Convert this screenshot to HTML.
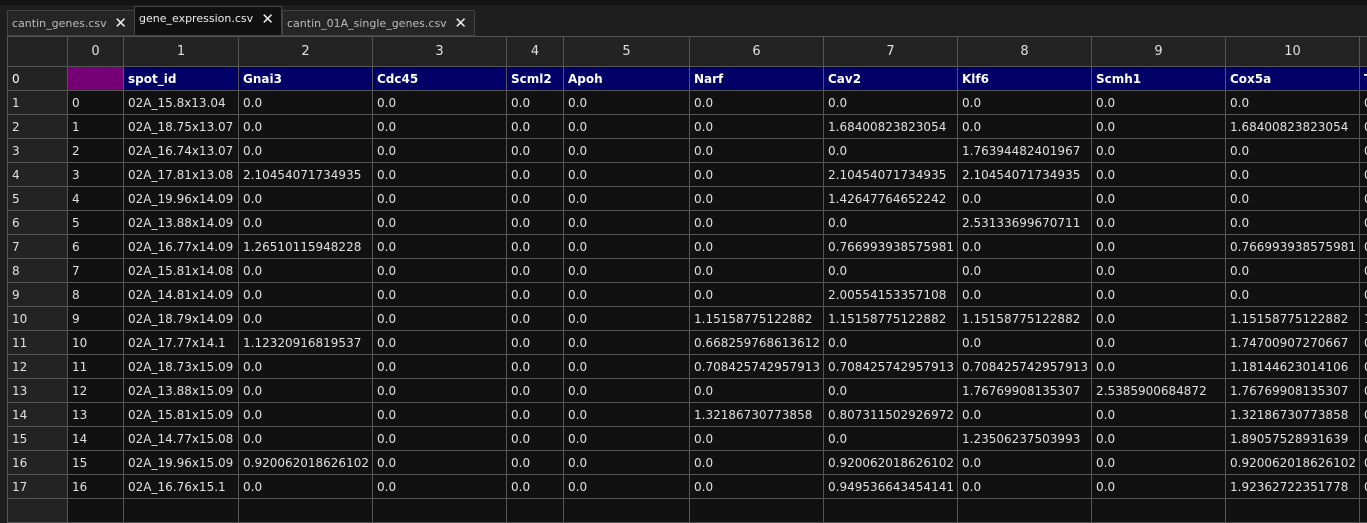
<!DOCTYPE html><html><head><style>
body{margin:0;width:1367px;height:502px;background:#1e1e1e;overflow:hidden;font-family:"DejaVu Sans","Liberation Sans",sans-serif;font-size:12px;color:#e0e0e0;position:relative}
.top{position:absolute;left:0;top:0;width:1367px;height:5px;background:#141414}
.tabs{position:absolute;left:7px;top:10px;height:26px;}
.tab{position:absolute;top:0;height:26px;background:#252525;border:1px solid #444;color:#bbb;font-size:11px;line-height:25px;padding-left:4px;box-sizing:border-box;white-space:nowrap;overflow:hidden}
.tab.a{background:#111;color:#eee;top:-4px;height:30px;line-height:24px}
.x{position:absolute;right:7px;font-size:15px;color:#eee}
table{position:absolute;left:7px;top:36px;border-collapse:collapse;table-layout:fixed;width:1372px}
td{border:1px solid #555;height:24px;padding:0 0 0 4px;background:#111;white-space:nowrap;overflow:hidden;box-sizing:border-box}
tr.h td{height:30px;background:#232323;text-align:center;font-size:13px;padding:0}
tr.n td{background:#000066;font-weight:bold;color:#fff}
tr.n td.p{background:#750075}
td.r{background:#232323!important;font-weight:normal!important}
</style></head><body>
<div class="top"></div>
<div class="tabs">
<div class="tab" style="left:0;width:128px">cantin_genes.csv<span class="x">✕</span></div>
<div class="tab a" style="left:127px;width:148px">gene_expression.csv<span class="x">✕</span></div>
<div class="tab" style="left:275px;width:193px">cantin_01A_single_genes.csv<span class="x">✕</span></div>
</div>
<table>
<colgroup><col style="width:60px"><col style="width:56px"><col style="width:115px"><col style="width:134px"><col style="width:134px"><col style="width:57px"><col style="width:126px"><col style="width:134px"><col style="width:134px"><col style="width:134px"><col style="width:134px"><col style="width:134px"><col style="width:20px"></colgroup>
<tr class="h"><td></td><td>0</td><td>1</td><td>2</td><td>3</td><td>4</td><td>5</td><td>6</td><td>7</td><td>8</td><td>9</td><td>10</td><td></td></tr>
<tr class="n"><td class="r">0</td><td class="p"></td><td>spot_id</td><td>Gnai3</td><td>Cdc45</td><td>Scml2</td><td>Apoh</td><td>Narf</td><td>Cav2</td><td>Klf6</td><td>Scmh1</td><td>Cox5a</td><td>T</td></tr>
<tr><td class="r">1</td><td>0</td><td>02A_15.8x13.04</td><td>0.0</td><td>0.0</td><td>0.0</td><td>0.0</td><td>0.0</td><td>0.0</td><td>0.0</td><td>0.0</td><td>0.0</td><td>0</td></tr>
<tr><td class="r">2</td><td>1</td><td>02A_18.75x13.07</td><td>0.0</td><td>0.0</td><td>0.0</td><td>0.0</td><td>0.0</td><td>1.68400823823054</td><td>0.0</td><td>0.0</td><td>1.68400823823054</td><td>0</td></tr>
<tr><td class="r">3</td><td>2</td><td>02A_16.74x13.07</td><td>0.0</td><td>0.0</td><td>0.0</td><td>0.0</td><td>0.0</td><td>0.0</td><td>1.76394482401967</td><td>0.0</td><td>0.0</td><td>0</td></tr>
<tr><td class="r">4</td><td>3</td><td>02A_17.81x13.08</td><td>2.10454071734935</td><td>0.0</td><td>0.0</td><td>0.0</td><td>0.0</td><td>2.10454071734935</td><td>2.10454071734935</td><td>0.0</td><td>0.0</td><td>0</td></tr>
<tr><td class="r">5</td><td>4</td><td>02A_19.96x14.09</td><td>0.0</td><td>0.0</td><td>0.0</td><td>0.0</td><td>0.0</td><td>1.42647764652242</td><td>0.0</td><td>0.0</td><td>0.0</td><td>0</td></tr>
<tr><td class="r">6</td><td>5</td><td>02A_13.88x14.09</td><td>0.0</td><td>0.0</td><td>0.0</td><td>0.0</td><td>0.0</td><td>0.0</td><td>2.53133699670711</td><td>0.0</td><td>0.0</td><td>0</td></tr>
<tr><td class="r">7</td><td>6</td><td>02A_16.77x14.09</td><td>1.26510115948228</td><td>0.0</td><td>0.0</td><td>0.0</td><td>0.0</td><td>0.766993938575981</td><td>0.0</td><td>0.0</td><td>0.766993938575981</td><td>0</td></tr>
<tr><td class="r">8</td><td>7</td><td>02A_15.81x14.08</td><td>0.0</td><td>0.0</td><td>0.0</td><td>0.0</td><td>0.0</td><td>0.0</td><td>0.0</td><td>0.0</td><td>0.0</td><td>0</td></tr>
<tr><td class="r">9</td><td>8</td><td>02A_14.81x14.09</td><td>0.0</td><td>0.0</td><td>0.0</td><td>0.0</td><td>0.0</td><td>2.00554153357108</td><td>0.0</td><td>0.0</td><td>0.0</td><td>0</td></tr>
<tr><td class="r">10</td><td>9</td><td>02A_18.79x14.09</td><td>0.0</td><td>0.0</td><td>0.0</td><td>0.0</td><td>1.15158775122882</td><td>1.15158775122882</td><td>1.15158775122882</td><td>0.0</td><td>1.15158775122882</td><td>1</td></tr>
<tr><td class="r">11</td><td>10</td><td>02A_17.77x14.1</td><td>1.12320916819537</td><td>0.0</td><td>0.0</td><td>0.0</td><td>0.668259768613612</td><td>0.0</td><td>0.0</td><td>0.0</td><td>1.74700907270667</td><td>0</td></tr>
<tr><td class="r">12</td><td>11</td><td>02A_18.73x15.09</td><td>0.0</td><td>0.0</td><td>0.0</td><td>0.0</td><td>0.708425742957913</td><td>0.708425742957913</td><td>0.708425742957913</td><td>0.0</td><td>1.18144623014106</td><td>0</td></tr>
<tr><td class="r">13</td><td>12</td><td>02A_13.88x15.09</td><td>0.0</td><td>0.0</td><td>0.0</td><td>0.0</td><td>0.0</td><td>0.0</td><td>1.76769908135307</td><td>2.5385900684872</td><td>1.76769908135307</td><td>0</td></tr>
<tr><td class="r">14</td><td>13</td><td>02A_15.81x15.09</td><td>0.0</td><td>0.0</td><td>0.0</td><td>0.0</td><td>1.32186730773858</td><td>0.807311502926972</td><td>0.0</td><td>0.0</td><td>1.32186730773858</td><td>0</td></tr>
<tr><td class="r">15</td><td>14</td><td>02A_14.77x15.08</td><td>0.0</td><td>0.0</td><td>0.0</td><td>0.0</td><td>0.0</td><td>0.0</td><td>1.23506237503993</td><td>0.0</td><td>1.89057528931639</td><td>0</td></tr>
<tr><td class="r">16</td><td>15</td><td>02A_19.96x15.09</td><td>0.920062018626102</td><td>0.0</td><td>0.0</td><td>0.0</td><td>0.0</td><td>0.920062018626102</td><td>0.0</td><td>0.0</td><td>0.920062018626102</td><td>0</td></tr>
<tr><td class="r">17</td><td>16</td><td>02A_16.76x15.1</td><td>0.0</td><td>0.0</td><td>0.0</td><td>0.0</td><td>0.0</td><td>0.949536643454141</td><td>0.0</td><td>0.0</td><td>1.92362722351778</td><td>0</td></tr>
<tr><td class="r"></td><td></td><td></td><td></td><td></td><td></td><td></td><td></td><td></td><td></td><td></td><td></td><td></td></tr>
</table>
</body></html>
